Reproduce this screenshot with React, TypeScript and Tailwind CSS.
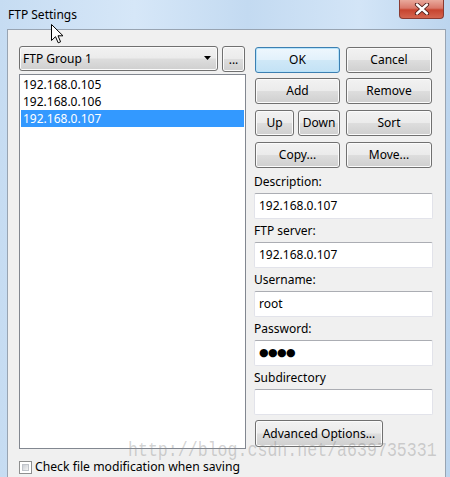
import React from "react";

const btn =
  "flex items-center justify-center h-[26px] rounded-[3px] border border-[#707070] bg-[linear-gradient(180deg,#f2f2f2_0%,#ebebeb_48%,#dddddd_52%,#cfcfcf_100%)] shadow-[inset_0_0_0_1px_#fbfbfb] text-[12px] text-black leading-none";

const input =
  "h-[26px] w-[179px] bg-white border border-[#e2e3ea] border-t-[#abadb3] rounded-[2px] px-[4px] flex items-center text-[12px] text-black";

function Field({ label, children }: { label: string; children?: React.ReactNode }) {
  return (
    <div className="flex flex-col mb-[1px]">
      <div className="h-[22px] leading-[22px] text-[12px] text-black">{label}</div>
      <div className={input}>{children}</div>
    </div>
  );
}

export default function App() {
  return (
    <div className="relative w-[450px] h-[477px] overflow-hidden font-['Noto_Sans',sans-serif] bg-[linear-gradient(90deg,#c6dcf2_0%,#d6e7f8_30%,#c3daf1_55%,#d3e5f7_80%,#bcd5ee_100%)]">
      {/* title bar */}
      <div className="h-[29px] pl-[8px] pt-[7px] text-[12px] leading-[16px] text-black">FTP Settings</div>

      {/* close button */}
      <div className="absolute left-[399px] top-0 w-[45px] h-[19px] rounded-b-[4px] border border-t-0 border-[#8a3b32] bg-[linear-gradient(180deg,#e9a99c_0%,#d9786a_45%,#c7442f_55%,#d4654f_100%)] flex items-center justify-center">
        <svg width="16" height="12" viewBox="0 0 16 12">
          <path d="M3 1.5 L13 10.5 M13 1.5 L3 10.5" stroke="#4a1a16" strokeWidth="4.2" strokeLinecap="round" />
          <path d="M3 1.5 L13 10.5 M13 1.5 L3 10.5" stroke="#ffffff" strokeWidth="2.4" strokeLinecap="round" />
        </svg>
      </div>

      {/* body */}
      <div className="flex h-[448px] pl-[7px] pr-[4px]">
        <div className="flex-1 flex bg-[#f0f0f0] border-t border-l border-r border-[#98a4b2] pl-[11px] pt-[16px]">
          {/* left column */}
          <div className="w-[227px] flex flex-col">
            <div className="flex">
              <div className="w-[199px] h-[25px] rounded-[3px] border border-[#707070] bg-[linear-gradient(180deg,#f2f2f2_0%,#ebebeb_48%,#dddddd_52%,#cfcfcf_100%)] shadow-[inset_0_0_0_1px_#fbfbfb] flex items-center justify-between pl-[3px] pr-[5px] text-[12px] text-black">
                <span>FTP Group 1</span>
                <svg width="8" height="5" viewBox="0 0 8 5">
                  <path d="M0 0 L7 0 L3.5 4 Z" fill="#000" />
                </svg>
              </div>
              <div className={btn + " ml-[4px] w-[23px] h-[25px] items-end pb-[5px] text-[11px]"}>...</div>
            </div>
            <div className="mt-[2px] h-[375px] bg-white border border-[#828790] p-[1px] text-[12px] text-black">
              <div className="h-[17px] leading-[17px] pl-[2px]">192.168.0.105</div>
              <div className="h-[17px] leading-[17px] pl-[2px]">192.168.0.106</div>
              <div className="h-[17px] leading-[17px] pl-[2px] bg-[#3399ff] text-white">192.168.0.107</div>
            </div>
            <div className="mt-[12px] flex items-center h-[13px]">
              <div className="w-[13px] h-[13px] border border-[#8e8f8f] bg-white p-[2px]">
                <div className="w-full h-full bg-[linear-gradient(135deg,#cbcfd5_0%,#f4f4f4_100%)] border border-[#c0c4ca]" />
              </div>
              <span className="ml-[3px] text-[12.2px] text-black leading-none whitespace-nowrap">Check file modification when saving</span>
            </div>
          </div>

          {/* right column */}
          <div className="ml-[8px] w-[179px] pt-[1px] flex flex-col">
            <div className="pl-[1px] flex flex-col">
              <div className="flex gap-[6px]">
                <div className="flex items-center justify-center h-[26px] w-[85px] rounded-[3px] border border-[#3c7fb1] bg-[linear-gradient(180deg,#eef7fd_0%,#e2f1fb_48%,#cfe8f7_52%,#c3e2f5_100%)] shadow-[inset_0_0_0_1px_#b6e3fb] text-[12px] text-black leading-none">OK</div>
                <div className={btn + " w-[86px]"}>Cancel</div>
              </div>
              <div className="flex gap-[6px] mt-[5px]">
                <div className={btn + " w-[85px]"}>Add</div>
                <div className={btn + " w-[86px]"}>Remove</div>
              </div>
              <div className="flex gap-[6px] mt-[6px]">
                <div className="flex gap-[4px] w-[85px]">
                  <div className={btn + " w-[39px]"}>Up</div>
                  <div className={btn + " w-[42px]"}>Down</div>
                </div>
                <div className={btn + " w-[86px]"}>Sort</div>
              </div>
              <div className="flex gap-[6px] mt-[6px]">
                <div className={btn + " w-[85px]"}>Copy...</div>
                <div className={btn + " w-[86px]"}>Move...</div>
              </div>
            </div>
            <div className="mt-[3px] flex flex-col">
              <Field label="Description:">192.168.0.107</Field>
              <Field label="FTP server:">192.168.0.107</Field>
              <Field label="Username:">root</Field>
              <Field label="Password:">
                <span className="font-['DejaVu_Sans',sans-serif] text-[11px] tracking-[-0.6px]">●●●●</span>
              </Field>
              <Field label="Subdirectory" />
            </div>
            <div className="pl-[1px] mt-[4px]">
              <div className={btn + " w-[128px] h-[27px]"}>Advanced Options...</div>
            </div>
          </div>
        </div>
      </div>

      {/* watermark */}
      <div className="pointer-events-none absolute left-[128px] top-[443px] font-['Liberation_Mono',monospace] text-[16.6px] leading-[20px] text-[rgba(140,140,140,0.38)] scale-y-125 origin-bottom whitespace-nowrap">
        http://blog.csdn.net/a639735331
      </div>

      {/* mouse cursor */}
      <svg className="absolute left-[51px] top-[24px]" width="13" height="20" viewBox="0 0 13 20">
        <path d="M0.5 0.5 L0.5 16.5 L4.5 12.7 L7.2 18.8 L9.6 17.8 L7 11.8 L12 11.8 Z" fill="#fff" stroke="#000" strokeWidth="1" strokeLinejoin="miter" />
      </svg>
    </div>
  );
}
